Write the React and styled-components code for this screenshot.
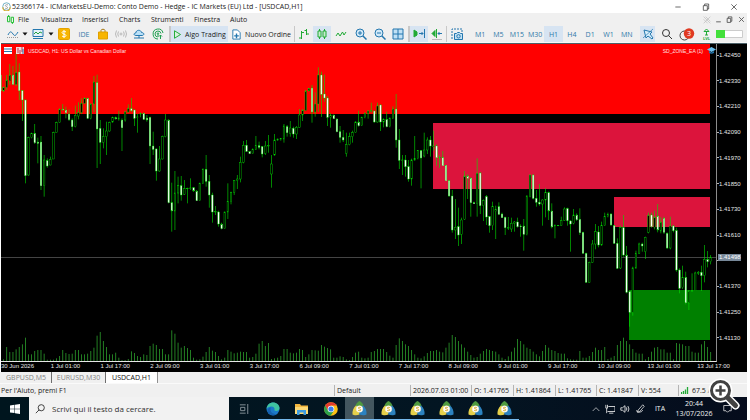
import styled, { createGlobalStyle } from "styled-components";

const GlobalStyle = createGlobalStyle`
  * { box-sizing: border-box; }
  body {
    margin: 0;
    background: #fff;
    font-family: "Open Sans", "Noto Sans", sans-serif;
    font-size: 7px;
    color: #1a1a1a;
  }
  button, input { font: inherit; color: inherit; }
  svg { display: block; flex: none; }
`;

const Window = styled.div`
  position: relative;
  display: flex;
  flex-direction: column;
  min-height: 100vh;
  padding-right: 3px;
  overflow: hidden;
`;

const TitleBar = styled.header`
  display: flex;
  align-items: center;
  height: 13px;
  padding-left: 2px;
  gap: 1px;
  background: #fff;
  white-space: nowrap;
`;

const Title = styled.h1`
  flex: 1;
  margin: 0;
  font-size: 7px;
  font-weight: 400;
  line-height: 13px;
`;

const MenuBar = styled.nav`
  display: flex;
  align-items: center;
  height: 13px;
  padding-left: 3px;
  background: #f0f0f0;
`;

const PlainButton = styled.button`
  display: flex;
  align-items: center;
  justify-content: center;
  height: 13px;
  width: ${(p) => (p.$w ? p.$w + "px" : "auto")};
  padding: 0;
  border: 0;
  background: none;
`;

const MenuItem = styled(PlainButton)`
  justify-content: flex-start;
`;

const Spacer = styled.div`
  flex: 1;
`;

const ToolBar = styled.div`
  display: flex;
  align-items: stretch;
  height: 17px;
  background: #f0f0f0;
  border-bottom: 1px solid #f7f7f7;
`;

const Tool = styled.button`
  display: flex;
  flex: none;
  align-items: center;
  justify-content: center;
  gap: 3px;
  width: ${(p) => p.$w || 18}px;
  padding: 0;
  border: 0;
  background: ${(p) => (p.$on ? "#d7e4f2" : "none")};
  color: ${(p) => p.$color || "#1a1a1a"};
  white-space: nowrap;
`;

const Grip = styled.span`
  flex: none;
  width: 4px;
  margin: 1px 0;
  background: radial-gradient(circle, #c4c4c4 40%, transparent 50%) 0 0 / 2px 2px;
`;

const Divider = styled.span`
  flex: none;
  width: ${(p) => p.$w || 1}px;
  border-right: 1px solid #c8c8c8;
`;

const Frames = styled.div`
  display: flex;
  width: 165px;

  button {
    flex: 1;
    color: #2f78a8;
  }
`;

const Chart = styled.main`
  position: relative;
  display: flex;
  flex: 1;
  flex-direction: column;
  min-height: 200px;
  margin-left: 1px;
  border-top: 1px solid #4c6068;
  background: #000;
  color: #e6e6e6;
  font-family: "Liberation Sans", Arial, sans-serif;
  font-size: 6px;
`;

const Plot = styled.div`
  display: flex;
  flex: 1;
  min-height: 0;
`;

const PlotArea = styled.div`
  flex: 1;
  min-width: 0;
  border-right: 1px solid #8c8c8c;
  border-bottom: 1px solid #e6e6e6;

  svg {
    width: 100%;
    height: 100%;
  }
`;

const PriceAxis = styled.div`
  position: relative;
  display: flex;
  flex-direction: column;
  justify-content: space-between;
  width: 30px;
  padding: 8px 0 21px;
`;

const Price = styled.span`
  display: flex;
  align-items: center;
  height: 6px;
  line-height: 6px;

  &::before {
    content: "";
    width: 2px;
    height: 1px;
    background: #b4b4b4;
  }
`;

const PriceTag = styled.output`
  position: absolute;
  top: 66%;
  left: 1px;
  right: 6px;
  height: 7px;
  padding-left: 1px;
  background: #778899;
  color: #fff;
  line-height: 7px;
`;

const TimeAxis = styled.div`
  display: grid;
  grid-template-columns: repeat(15, 1fr);
  height: 10px;
  line-height: 9px;
  white-space: nowrap;
`;

const ChartCaption = styled.div`
  position: absolute;
  top: 2px;
  left: 3px;
  right: 31px;
  display: flex;
  align-items: center;
  gap: 4px;
  height: 9px;
  color: #ffe0e0;
  font-size: 5px;
`;

const Tabs = styled.div`
  display: flex;
  height: 12px;
  padding-left: 1px;
  background: #f0f0f0;
  border-bottom: 1px solid #fafafa;
`;

const Tab = styled.button`
  width: ${(p) => p.$w}px;
  padding: 0;
  border: 0;
  border-right: 1px solid ${(p) => (p.$on ? "#909090" : "#6e6e6e")};
  background: ${(p) => (p.$on ? "#fff" : "none")};
  color: ${(p) => (p.$on ? "#101010" : "#828282")};
  line-height: 11px;
`;

const StatusBar = styled.footer`
  display: flex;
  align-items: center;
  height: 13px;
  background: #f0f0f0;
  line-height: 11px;
  white-space: nowrap;
`;

const StatusCell = styled.span`
  display: flex;
  align-items: center;
  gap: 3px;
  flex: ${(p) => (p.$w ? "none" : 1)};
  width: ${(p) => (p.$w ? p.$w + "px" : "auto")};
  padding-left: ${(p) => (p.$w ? 2 : 1)}px;
  border-left: ${(p) => (p.$w ? "1px solid #b4b4b4" : 0)};
`;

const TaskBar = styled.div`
  display: flex;
  align-items: stretch;
  height: 23px;
  background: linear-gradient(90deg, #00151e, #031522 60%, #050c1c);
  color: #f2f2f2;
`;

const Task = styled.button`
  display: flex;
  align-items: center;
  justify-content: center;
  width: 29px;
  padding: 0;
  border: 0;
  background: ${(p) => (p.$on ? "#43565f" : "none")};
  box-shadow: ${(p) => (p.$open ? "inset 0 -1px #76b9ed" : "none")};
`;

const SearchBox = styled.label`
  display: flex;
  align-items: center;
  gap: 7px;
  width: 200px;
  padding-left: 6px;
  background: #f2f2f2;
`;

const SearchInput = styled.input`
  flex: 1;
  min-width: 0;
  padding: 0;
  border: 0;
  outline: none;
  background: none;
  font-size: 8px;

  &::placeholder {
    color: #303030;
    opacity: 1;
  }
`;

const Tray = styled.div`
  display: flex;
  align-items: center;
  padding-right: 10px;
`;

const Clock = styled.time`
  width: 46px;
  line-height: 10px;
  text-align: center;
`;

const Magnifier = styled.button`
  position: absolute;
  right: 10px;
  bottom: 10px;
  padding: 0;
  border: 0;
  background: none;
`;

// open, high, low, close in thirds of a pixel below the top of the pane
const BARS = [
  [105,105,153,153],[153,140,155,142],[142,105,150,120],[122,72,135,105],[105,78,135,133],[133,38,138,98],[96,70,180,152],[152,150,243,180],
  [180,178,430,407],[405,290,407,293],[293,278,295,280],[280,252,312,308],[306,293,370,310],[306,288,450,437],[437,345,470,360],[362,355,383,378],
  [375,350,376,358],[357,275,357,278],[278,245,278,248],[247,205,248,208],[207,192,212,210],[210,200,235,218],[222,208,243,239],[240,235,273,260],
  [260,197,262,226],[228,187,238,218],[218,175,222,190],[190,172,192,175],[175,173,237,235],[235,190,238,192],[192,108,216,126],[128,104,384,267],
  [265,240,372,307],[307,265,325,290],[290,245,345,273],[273,245,275,248],[246,230,248,233],[233,230,238,237],[237,212,242,234],[240,235,333,263],
  [240,212,245,216],[216,193,218,206],[206,174,216,212],[210,208,258,235],[233,222,278,231],[222,218,232,220],[220,218,240,238],[234,225,245,240],
  [232,230,372,318],[318,275,345,328],[327,325,422,393],[393,318,395,357],[357,287,358,290],[290,222,292,240],[240,238,490,488],[488,428,575,513],
  [513,393,570,459],[459,410,490,437],[437,408,482,465],[463,420,465,446],[446,443,490,445],[445,415,450,444],[443,442,455,453],[453,450,483,482],
  [482,428,483,430],[430,385,432,388],[388,345,440,424],[424,405,503,465],[465,458,548,516],[516,498,525,514],[516,512,560,552],[552,548,568,566],
  [566,515,567,516],[516,430,537,485],[485,455,493,457],[457,420,465,422],[422,405,447,417],[417,350,427,367],[367,303,370,316],[316,300,336,334],
  [334,333,342,341],[341,325,342,328],[328,288,330,316],[317,305,328,322],[320,318,352,342],[340,303,345,318],[318,285,338,316],[402,345,443,372],
  [345,282,347,300],[300,296,302,297],[299,294,302,296],[297,252,308,258],[260,255,290,278],[280,243,290,264],[265,260,293,282],[282,258,297,262],
  [262,207,263,225],[225,207,243,211],[211,150,213,153],[153,144,153,146],[144,135,248,216],[216,157,230,192],[192,82,216,105],[105,95,231,163],
  [162,104,185,174],[174,168,258,232],[232,220,263,226],[225,224,237,236],[237,235,277,275],[275,258,308,292],[292,270,306,300],[340,278,350,314],
  [314,278,316,290],[290,272,308,278],[278,244,279,246],[246,212,260,257],[256,230,257,233],[233,217,235,220],[220,210,236,213],[213,188,218,212],
  [213,212,248,246],[246,188,248,198],[195,193,273,246],[246,235,262,238],[238,215,262,260],[260,232,262,236],[236,199,237,207],[207,162,323,300],
  [300,267,387,361],[361,345,405,360],[360,345,410,380],[380,360,425,417],[417,356,437,360],[360,288,362,356],[356,330,358,332],[332,330,445,354],
  [348,278,352,330],[330,292,342,300],[300,288,350,318],[319,272,332,318],[318,313,377,353],[353,345,384,352],[353,333,377,377],[376,375,423,422],
  [422,420,470,468],[468,450,578,570],[570,477,597,562],[560,503,618,585],[583,533,612,540],[538,393,540,408],[408,403,477,415],[414,413,530,488],
  [488,485,492,491],[491,355,530,400],[399,397,522,497],[497,478,543,482],[470,465,555,531],[530,528,578,557],[557,485,570,500],[515,497,597,508],
  [500,487,525,523],[522,518,533,533],[532,530,585,563],[565,531,570,563],[567,533,576,550],[550,543,575,546],[546,533,563,560],[558,553,590,560],
  [558,537,632,583],[584,466,586,468],[470,403,472,405],[405,403,478,475],[475,450,500,487],[487,432,497,492],[492,478,557,480],[480,445,532,458],
  [458,455,540,513],[513,490,565,561],[560,553,595,557],[557,555,558,556],[557,530,558,542],[541,502,543,507],[506,503,557,542],[543,540,635,552],
  [550,507,553,525],[525,520,543,539],[538,505,585,578],[577,575,640,640],[640,638,728,727],[727,665,728,667],[667,600,668,612],[612,552,628,575],
  [576,558,622,615],[615,545,617,557],[557,518,558,530],[530,518,532,523],[522,520,557,555],[557,555,612,610],[610,595,687,685],[684,557,687,563],
  [563,525,650,645],[645,618,760,757],[755,753,860,817],[817,680,827,684],[684,632,686,640],[640,608,642,612],[612,608,635,618],[635,590,657,592],
  [577,518,580,527],[525,518,563,560],[562,512,568,532],[528,492,577,570],[573,532,580,547],[535,530,582,577],[580,577,627,624],[624,530,628,558],
  [558,555,577,572],[572,563,695,690],[690,685,760,745],[743,677,747,712],[712,695,793,788],[789,750,810,753],[753,700,755,752],[752,695,753,699],
  [700,693,705,697],[697,677,753,707],[707,615,727,658],[658,633,682,665],[665,645,673,652],
];

const VOLUMES = [
  0,5,42,27,27,35,42,50,70,20,20,30,33,33,22,4,4,4,8,15,33,24,21,22,33,33,20,20,22,30,40,76,87,60,42,20,
  20,25,10,3,3,6,29,24,15,12,20,18,45,52,48,36,36,20,20,92,82,55,40,45,39,33,10,4,5,13,27,42,31,27,15,5,
  10,33,28,23,25,28,27,27,10,12,22,52,60,45,54,6,8,10,15,36,36,25,23,25,36,33,12,20,33,32,31,48,43,39,35,10,
  10,14,12,5,3,12,25,28,10,8,10,27,30,36,36,36,27,16,10,48,68,60,50,45,33,20,10,8,14,24,30,30,33,28,26,40,
  55,78,72,60,50,40,28,18,10,12,22,30,36,33,30,28,20,10,6,14,28,40,66,60,50,40,36,28,20,14,30,48,40,33,30,24,
  22,22,8,5,4,4,30,10,10,15,27,40,33,33,42,6,10,15,48,60,70,60,50,36,25,22,22,5,12,28,40,42,35,35,25,25,
  5,54,52,50,45,45,28,25,25,50,60,42,27,
];

const ZONES = [
  { x: 0, y: 44, h: 70, color: "#ff0000" },
  { x: 433, y: 123, h: 66, color: "#dc143c" },
  { x: 614, y: 197, h: 30, color: "#dc143c" },
  { x: 629, y: 290, h: 50, color: "#008000" },
];

// the empty step is the one the current price tag covers
const PRICES = ["1.42450", "1.42330", "1.42210", "1.42090", "1.41970", "1.41850", "1.41730", "1.41610", "", "1.41370", "1.41250", "1.41130"];
const TIMES = ["30 Jun 2026", "1 Jul 01:00", "1 Jul 17:00", "2 Jul 09:00", "3 Jul 01:00", "3 Jul 17:00", "6 Jul 09:00", "7 Jul 01:00", "7 Jul 17:00", "8 Jul 09:00", "9 Jul 01:00", "9 Jul 17:00", "10 Jul 09:00", "13 Jul 01:00", "13 Jul 17:00"];
const MENUS = [["File", 23], ["Visualizza", 41], ["Inserisci", 37], ["Charts", 32], ["Strumenti", 43], ["Finestra", 36], ["Aiuto", 24]];
const FRAMES = ["M1", "M5", "M15", "M30", "H1", "H4", "D1", "W1", "MN"];

const barX = (i) => 0.5 + i * 3.115;
const barY = (v) => 40 + v / 3;

const Candle = ({ bar, x }) => {
  const [open, high, low, close] = bar;
  const down = close > open;
  const top = barY(Math.min(open, close));
  const height = Math.max(Math.abs(close - open) / 3, 0.5);
  return (
    <g>
      <rect x={x - 0.3} y={barY(high)} width="0.6" height={(low - high) / 3} fill="#00e000" />
      <rect x={x - 0.8} y={top} width="1.6" height={height} fill={down ? "#fff" : "#000"} stroke="#00e000" strokeWidth="0.4" />
    </g>
  );
};

const PriceChart = () => (
  <svg viewBox="1 44 715 317" preserveAspectRatio="none" role="img" aria-label="USDCAD H1">
    {ZONES.map((z) => (
      <rect key={z.y} x={z.x} y={z.y} width={710 - z.x} height={z.h} fill={z.color} />
    ))}
    <path d="M0 257.5H716" stroke="#444" />
    {VOLUMES.map((v, i) => (
      <rect key={i} x={barX(i) - 0.35} y={361 - v / 3} width="0.7" height={v / 3} fill="#32b432" />
    ))}
    {BARS.map((bar, i) => (
      <Candle key={i} bar={bar} x={barX(i)} />
    ))}
  </svg>
);

const Icon = ({ size = 12, children, ...rest }) => (
  <svg width={size} height={size} viewBox="0 0 12 12" fill="none" stroke="#2477ae" strokeWidth="1" aria-hidden="true" {...rest}>
    {children}
  </svg>
);

const Caret = () => (
  <svg width="6" height="4" viewBox="0 0 6 4" aria-hidden="true"><path d="M.5 .5h5L3 3.5z" fill="#111" /></svg>
);

const MetaTrader = () => (
  <svg width="15" height="15" viewBox="0 0 15 15" aria-hidden="true">
    <path d="M7.500 0c2.500 1.500 4.500 3.500 4 7h-8c-.5-3.500 1.500-5.500 4-7z" fill="#4f9a3f" />
    <path d="M4 4.500c2.500 2 4.500 5 3.500 9-2 1-5.500 1-7 0C0 10 1.500 6.500 4 4.500z" fill="#e6d04a" />
    <path d="M11 4.500c2.500 2 4 5.500 3.500 9-1.500 1-5 1-7 0-1-4 1-7 3.500-9z" fill="#2c82c0" />
    <circle cx="7.500" cy="8" r="3.300" fill="#fff" stroke="#f2e6c0" strokeWidth=".5" />
    <path d="M8.800 6.700c-1-.7-2.500-.5-2.500.4s2.500.7 2.500 1.700-1.700 1.200-2.700.4" fill="none" stroke="#d6a01c" strokeWidth=".9" />
  </svg>
);

const CandleIcon = () => (
  <Icon stroke="#20aa35"><path d="M3.500 1v10M8.500 1v10" /><path d="M2 3h3v6H2zM7 3h3v6H7z" fill="#c7ecd0" /></Icon>
);

const MainToolbar = () => (
  <ToolBar>
    <Grip />
    <Tool aria-label="Linea"><Icon><path d="M0 9.500h11" stroke="#999" strokeDasharray="1 1" /><path d="M1 7c2-4 3-4 5-1s3 1 5-2" /></Icon></Tool>
    <Tool $w={6} aria-label="Altre linee"><Caret /></Tool>
    <Tool $w={20} aria-label="Grafico"><Icon><path d="M1 1.500h10v7H1zM1 10.500h10" fill="#e4f1fa" /><path d="M2 6l2-2 2 2 2-2 2 1" stroke="#20a040" /></Icon></Tool>
    <Tool $w={6} aria-label="Altri grafici"><Caret /></Tool>
    <Tool $w={20} aria-label="Simboli">
      <Icon><rect x=".5" y=".5" width="11" height="11" rx="1" fill="#f7b500" stroke="#e5a200" /><path d="M8 4C6.500 2.800 4 3.300 4 4.700S8 6 8 7.500 5 9 4 8M6 2v8" stroke="#fff" /></Icon>
    </Tool>
    <Tool $w={20} $color="#2f78a8">IDE</Tool>
    <Tool aria-label="Market"><Icon><path d="M4 4V2.500C4 .8 8 .8 8 2.500V4" stroke="#a87a10" /><path d="M1.500 4h9v7h-9z" fill="#f7b500" stroke="#e0a000" /></Icon></Tool>
    <Tool aria-label="Segnali"><Icon stroke="#b8b8b8"><circle cx="6" cy="6" r="1" /><path d="M3.500 3.500q-1.500 2.500 0 5M8.500 3.500q1.500 2.500 0 5M1.500 2.500q-2 3.500 0 7M10.500 2.500q2 3.500 0 7" /></Icon></Tool>
    <Tool aria-label="VPS"><Icon><path d="M3 7.500C.5 7.500.5 5 2.800 5 3 1.500 8 1.500 8.500 4.500c3 0 3 3 .5 3z" fill="#b9e0f8" /><path d="M1 10h10M6 7.500V10" /></Icon></Tool>
    <Tool $w={20} aria-label="Copia segnale"><Icon stroke="#20a050"><path d="M11 5A5 5 0 1 0 6 11M9 5.500A3 3 0 1 0 5.500 9" /><path d="M6 6v3M8.500 11V7M7 8.500L8.500 7 10 8.500" /><circle cx="6" cy="5.500" r=".7" /></Icon></Tool>
    <Divider $w={2} />
    <Divider />
    <Tool $w={57} $on><Icon size={9} stroke="#20aa35"><path d="M2 1l8 5-8 5z" fill="#d7f2dc" strokeWidth="1.300" /></Icon>Algo Trading</Tool>
    <Tool $w={66}><Icon size={11}><path d="M2 1h5l3 3v7H2z" fill="#fff" /><path d="M6 5v5M3.500 7.500h5" strokeWidth="1.500" /></Icon>Nuovo Ordine</Tool>
    <Divider />
    <Tool aria-label="Barre"><Icon stroke="#20aa35"><path d="M3.500 3v8M1 10h2.500M3.500 4.500H6M8.500 1v6M6.500 2.500h2M8.500 6H11" /></Icon></Tool>
    <Tool $on aria-label="Candele"><CandleIcon /></Tool>
    <Tool $w={20} aria-label="Linea"><Icon stroke="#20aa35"><path d="M1 8l2-3 2 3 2.500-4L9 7l2-3" /></Icon></Tool>
    <Tool $w={20} aria-label="Ingrandisci"><Icon><circle cx="5" cy="5" r="4" fill="#d2e9f8" /><path d="M3 5h4M5 3v4" /><path d="M8 8l3.500 3.500" strokeWidth="1.500" /></Icon></Tool>
    <Tool aria-label="Riduci"><Icon><circle cx="5" cy="5" r="4" fill="#d2e9f8" /><path d="M3 5h4" /><path d="M8 8l3.500 3.500" strokeWidth="1.500" /></Icon></Tool>
    <Tool aria-label="Affianca"><Icon><path d="M1 1h10v10H1zM6 1v10M1 6h10" fill="#c1e1f5" /></Icon></Tool>
    <Divider $w={2} />
    <Divider />
    <Tool $on aria-label="Scorrimento"><Icon><path d="M1 2v7l3-2V4zM3 3v5" fill="#20aa35" stroke="#20aa35" /><path d="M6 5.500h4M8.500 4L10 5.500 8.500 7M11.500 1v9" /></Icon></Tool>
    <Tool aria-label="Spostamento"><Icon><path d="M1 5.500l3-3v6zM5.500 1v9" fill="#20aa35" stroke="#20aa35" /><path d="M7 5.500h4M8.500 4L7 5.500 8.500 7" /><path d="M1 11.500h10" stroke="#bbb" /></Icon></Tool>
    <Divider />
    <Tool $w={20} aria-label="Foto"><Icon><path d="M1 11V1h10v3" strokeDasharray="2 1" /><path d="M3.500 5.500h2l1-1h2l1 1h2v6h-8z" fill="#c1e1f5" /><circle cx="7.500" cy="8.300" r="1.700" /></Icon></Tool>
    <Grip />
    <Frames>
      {FRAMES.map((f) => <Tool key={f} $on={f === "H1"}>{f}</Tool>)}
    </Frames>
    <Grip />
    <Tool $w={15} $on aria-label="Cursore"><Icon><path d="M2 2l8 2-2 2 3 4-1 1-4-3-2 2z" fill="#d8effc" /><path d="M1 10L11 1" strokeWidth=".7" /></Icon></Tool>
    <Tool $w={23} aria-label="Cerca"><Icon stroke="#333"><circle cx="5" cy="5" r="3.500" /><path d="M7.500 7.500L11 11" /></Icon></Tool>
    <Tool $w={18} aria-label="Notifiche">
      <svg width="16" height="13" viewBox="0 0 16 13">
        <circle cx="5.500" cy="7.500" r="4.500" fill="none" stroke="#444" />
        <circle cx="10" cy="5.500" r="5.200" fill="#e03a22" />
        <text x="10" y="8" fontSize="7" fill="#fff" textAnchor="middle">3</text>
      </svg>
    </Tool>
    <Tool $w={20} aria-label="Livello"><svg width="9" height="13" viewBox="0 0 9 13"><path d="M4.500 1l2.500 2.500H2zM4.500 3v4M3 7h3" stroke="#20aa35" fill="none" /><text x="4.500" y="12" fontSize="4" fontWeight="700" fill="#20aa35" textAnchor="middle">LVL</text></svg></Tool>
    <Tool $w={27} aria-label="Carica"><svg width="27" height="8" viewBox="0 0 27 8"><path d="M.5 .5h26v7H.5z" fill="#fff" stroke="#ccc" /><path d="M0 0h9v8H0z" fill="#43e03b" /></svg></Tool>
  </ToolBar>
);

const App = () => (
  <>
    <GlobalStyle />
    <Window>
      <TitleBar>
        <Icon size={9}><circle cx="6" cy="6" r="5" fill="#fff" stroke="#4a9bb4" /><path d="M1 7a5 5 0 0 0 10 0" stroke="#dda91f" strokeWidth="1.500" /><path d="M8 4C6 3 4 4 4.500 5S8 6.500 7.500 8 4.500 8.500 4 8" stroke="#888" /></Icon>
        <Title>52366174 - ICMarketsEU-Demo: Conto Demo - Hedge - IC Markets (EU) Ltd - [USDCAD,H1]</Title>
        <PlainButton $w={27} aria-label="Riduci"><Icon size={8} stroke="#222"><path d="M2 6h8" /></Icon></PlainButton>
        <PlainButton $w={27} aria-label="Ripristina"><Icon size={8} stroke="#222"><path d="M2 4h6v7H2zM4 4V1.500h6V9H8" /></Icon></PlainButton>
        <PlainButton $w={27} aria-label="Chiudi"><Icon size={8} stroke="#222"><path d="M2 2l8 8M10 2l-8 8" /></Icon></PlainButton>
      </TitleBar>
      <MenuBar>
        <PlainButton $w={15} aria-label="Grafico"><Icon size={9} stroke="#20c030"><path d="M2 2h3v7H2zM7 3h3v7H7zM3.500 0v2M8.500 10v2" strokeWidth="1.300" /></Icon></PlainButton>
        {MENUS.map(([name, w]) => <MenuItem key={name} $w={w}>{name}</MenuItem>)}
        <Spacer />
        <PlainButton $w={12} aria-label="Segnale"><Icon size={8} stroke="#bbb"><path d="M1 1l10 10M4 1l7 7M1 5l6 6M11 1L1 11" /></Icon></PlainButton>
        <PlainButton $w={11} aria-label="Riduci grafico"><Icon size={7} stroke="#555"><path d="M2 10h8" strokeWidth="1.500" /></Icon></PlainButton>
        <PlainButton $w={11} aria-label="Ripristina grafico"><Icon size={7} stroke="#555" strokeWidth="1.500"><path d="M2 4h6v7H2zM4 4V1.500h6V9H8" /></Icon></PlainButton>
        <PlainButton $w={12} aria-label="Chiudi grafico"><Icon size={7} stroke="#555" strokeWidth="1.500"><path d="M2 2l8 8M10 2l-8 8" /></Icon></PlainButton>
      </MenuBar>
      <MainToolbar />
      <Chart>
        <Plot>
          <PlotArea><PriceChart /></PlotArea>
          <PriceAxis>
            {PRICES.map((p) => <Price key={p}>{p}</Price>)}
            <PriceTag>1.41498</PriceTag>
          </PriceAxis>
        </Plot>
        <TimeAxis>
          {TIMES.map((t) => <span key={t}>{t}</span>)}
        </TimeAxis>
        <ChartCaption>
          <svg width="8" height="7" viewBox="0 0 8 7"><path d="M0 0h8v7H0z" fill="#fff" /><path d="M0 2h8M0 4.500h8" stroke="#2477ae" /></svg>
          <svg width="8" height="7" viewBox="0 0 8 7"><path d="M0 0h8v7H0z" fill="#f3d8dc" /><path d="M2 1v5M4 3v4M6 0v5" stroke="#c0394b" /><path d="M7 2v5" stroke="#2477ae" /></svg>
          <span>USDCAD, H1:  US Dollar vs Canadian Dollar</span>
          <Spacer />
          <span>SD_ZONE_EA (1)</span>
          <svg width="9" height="7" viewBox="0 0 9 7"><path d="M4.500 0L9 2.500 4.500 5 0 2.500z" fill="#6cc0ee" /><path d="M2 4v2q2.500 1.500 5 0V4L4.500 5.500z" fill="#2477ae" /></svg>
        </ChartCaption>
      </Chart>
      <Tabs role="tablist">
        <Tab role="tab" $w={51}>GBPUSD,M5</Tab>
        <Tab role="tab" $w={54}>EURUSD,M30</Tab>
        <Tab role="tab" aria-selected="true" $w={52} $on>USDCAD,H1</Tab>
      </Tabs>
      <StatusBar>
        <StatusCell>Per l'Aiuto, premi F1</StatusCell>
        <StatusCell $w={76}>Default</StatusCell>
        <StatusCell $w={61}>2026.07.03 01:00</StatusCell>
        <StatusCell $w={42}>O: 1.41765</StatusCell>
        <StatusCell $w={42}>H: 1.41864</StatusCell>
        <StatusCell $w={41}>L: 1.41765</StatusCell>
        <StatusCell $w={42}>C: 1.41847</StatusCell>
        <StatusCell $w={40}>V: 554</StatusCell>
        <StatusCell $w={69}>
          <svg width="8" height="7" viewBox="0 0 8 7"><path d="M.5 5v2M2.500 4v3M4.500 2.500V7M6.500 0v7" stroke="#20aa35" strokeWidth="1.300" /></svg>
          67.5 / 0.5
        </StatusCell>
      </StatusBar>
      <TaskBar>
        <Task aria-label="Start"><svg width="10" height="10" viewBox="0 0 10 10"><path d="M0 1.400l4.500-.6v3.900H0zM5 .7L10 0v4.700H5zM0 5.200h4.500v3.900L0 8.500zM5 5.200h5V10l-5-.7z" fill="#fff" /></svg></Task>
        <SearchBox>
          <Icon size={10} stroke="#222"><circle cx="7.500" cy="4.500" r="3.700" /><path d="M5 7L1 11" /></Icon>
          <SearchInput type="search" placeholder="Scrivi qui il testo da cercare." />
        </SearchBox>
        <Task aria-label="Visualizzazione attività"><Icon size={10} stroke="#9aa5ab"><path d="M2 4h5v4H2zM1 1h7M1 11h7M10.500 0v12" /></Icon></Task>
        <Task $open aria-label="Edge">
          <svg width="14" height="14" viewBox="0 0 14 14">
            <circle cx="7" cy="7" r="6.500" fill="#1b79c9" />
            <path d="M.6 7C1 2.500 4 .5 7 .5c4 0 6.500 2.700 6.500 5.500 0 2-1.500 3-3.500 3-1 0-2-.5-1.500-1.200C9 6 7.500 4.500 5.500 4.500 3 4.500 1.200 5.500.6 7z" fill="#3fc3a0" />
            <path d="M5 5.500C3.500 8 5 12.500 11 12c-3 2.300-9 1.700-9.500-3C1.400 7 3 5.500 5 5.500z" fill="#1560ae" />
          </svg>
        </Task>
        <Task $open aria-label="Esplora file"><svg width="13" height="12" viewBox="0 0 13 12"><path d="M0 1h5l1 1.500h7V11H0z" fill="#f4b73f" /><path d="M0 4h13v7H0z" fill="#fcd976" /><path d="M2 7h9v5H8.500V9.500h-4V12H2z" fill="#3d9be0" /></svg></Task>
        <Task $open aria-label="Chrome">
          <svg width="14" height="14" viewBox="0 0 14 14">
            <circle cx="7" cy="7" r="6.800" fill="#fbc116" />
            <path d="M1.100 3.600A6.800 6.800 0 0 1 12.900 3.600H7L4 8.700z" fill="#e33b2e" />
            <path d="M1.100 3.600A6.800 6.800 0 0 0 6.500 13.800L10 8.700H4z" fill="#2ba24c" />
            <circle cx="7" cy="7" r="3.300" fill="#fff" /><circle cx="7" cy="7" r="2.600" fill="#3b7ded" />
          </svg>
        </Task>
        {[1, 2, 3, 4, 5, 6].map((n) => (
          <Task key={n} $open $on={n === 1} aria-label={"MetaTrader " + n}><MetaTrader /></Task>
        ))}
        <Spacer />
        <Tray>
          <PlainButton $w={14} aria-label="Altro"><Icon size={8} stroke="#eee"><path d="M1 9l5-5 5 5" /></Icon></PlainButton>
          <PlainButton $w={14} aria-label="Rete"><Icon size={10} stroke="#eee"><path d="M4 3h8v6H3M5 11h5M1 1v4h2V1M2 5v6" /></Icon></PlainButton>
          <PlainButton $w={15} aria-label="Volume"><Icon size={10} stroke="#eee"><path d="M1 4.500h2L6 2v8L3 7.500H1zM7.500 4q1.500 2 0 4M9.500 2.500q2.500 3.500 0 7" /></Icon></PlainButton>
          <PlainButton $w={17} aria-label="Penna"><Icon size={9} stroke="#eee"><path d="M3 8l6-7 2 2-6 7-3 1zM1 8q-1 3 3 3t5-3" /></Icon></PlainButton>
          <PlainButton $w={22}>ITA</PlainButton>
          <Clock>20:44<br />13/07/2026</Clock>
          <PlainButton $w={20} aria-label="Centro notifiche"><Icon size={9} stroke="#eee"><path d="M1 2h10v7H8l-2 2-2-2H1z" /></Icon></PlainButton>
        </Tray>
      </TaskBar>
      <Magnifier aria-label="Ingrandisci immagine">
        <svg width="32" height="32" viewBox="0 0 32 32">
          <path d="M19.500 19.500l8 8" stroke="#fff" strokeWidth="8" strokeLinecap="round" />
          <circle cx="12.500" cy="12.500" r="9.500" fill="#fff" stroke="#fff" strokeWidth="5" />
          <path d="M19.500 19.500l8 8" stroke="#424242" strokeWidth="5" strokeLinecap="round" />
          <circle cx="12.500" cy="12.500" r="9" fill="#fff" stroke="#424242" strokeWidth="3" />
          <path d="M7.500 12.500h10M12.500 7.500v10" stroke="#424242" strokeWidth="2.500" />
        </svg>
      </Magnifier>
    </Window>
  </>
);

export default App;
